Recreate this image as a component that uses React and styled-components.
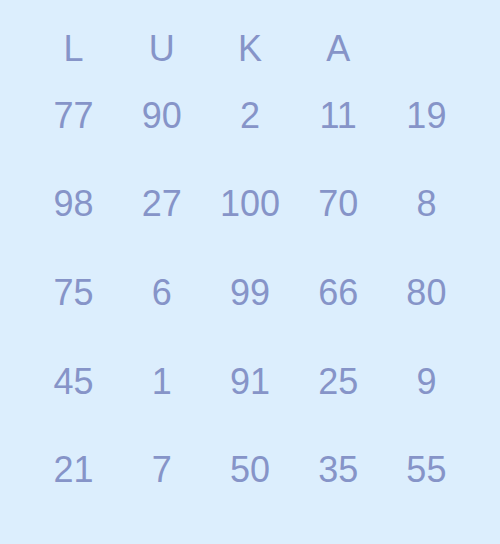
import React from 'react'
import styled, { createGlobalStyle } from 'styled-components'

const GlobalStyle = createGlobalStyle`
	html, body {
		margin: 0;
		background-color: #dceefd;
		font-family: "Liberation Sans", Arial, sans-serif;
	}
`

const Board = styled.div`
	width: 441px;
	margin: 0 auto;
	padding-top: 25px;
	display: grid;
	grid-template-columns: repeat(5, 1fr);
	color: #8694c8;
	font-size: 36px;
	text-align: center;
	user-select: none;
`

const HeaderCell = styled.div`
	height: 46.7px;
	line-height: 47px;
`

const Cell = styled.div`
	height: 88.7px;
	line-height: 88.7px;
`

const letters = ['L', 'U', 'K', 'A', '']

const numbers = [
	[77, 90, 2, 11, 19],
	[98, 27, 100, 70, 8],
	[75, 6, 99, 66, 80],
	[45, 1, 91, 25, 9],
	[21, 7, 50, 35, 55],
]

const App = () => {
	return (
		<>
			<GlobalStyle />
			<Board>
				{letters.map((l, i) => (
					<HeaderCell key={'h' + i}>{l}</HeaderCell>
				))}
				{numbers.map((row, r) =>
					row.map((n, c) => <Cell key={r + '-' + c}>{n}</Cell>)
				)}
			</Board>
		</>
	)
}

export default App
